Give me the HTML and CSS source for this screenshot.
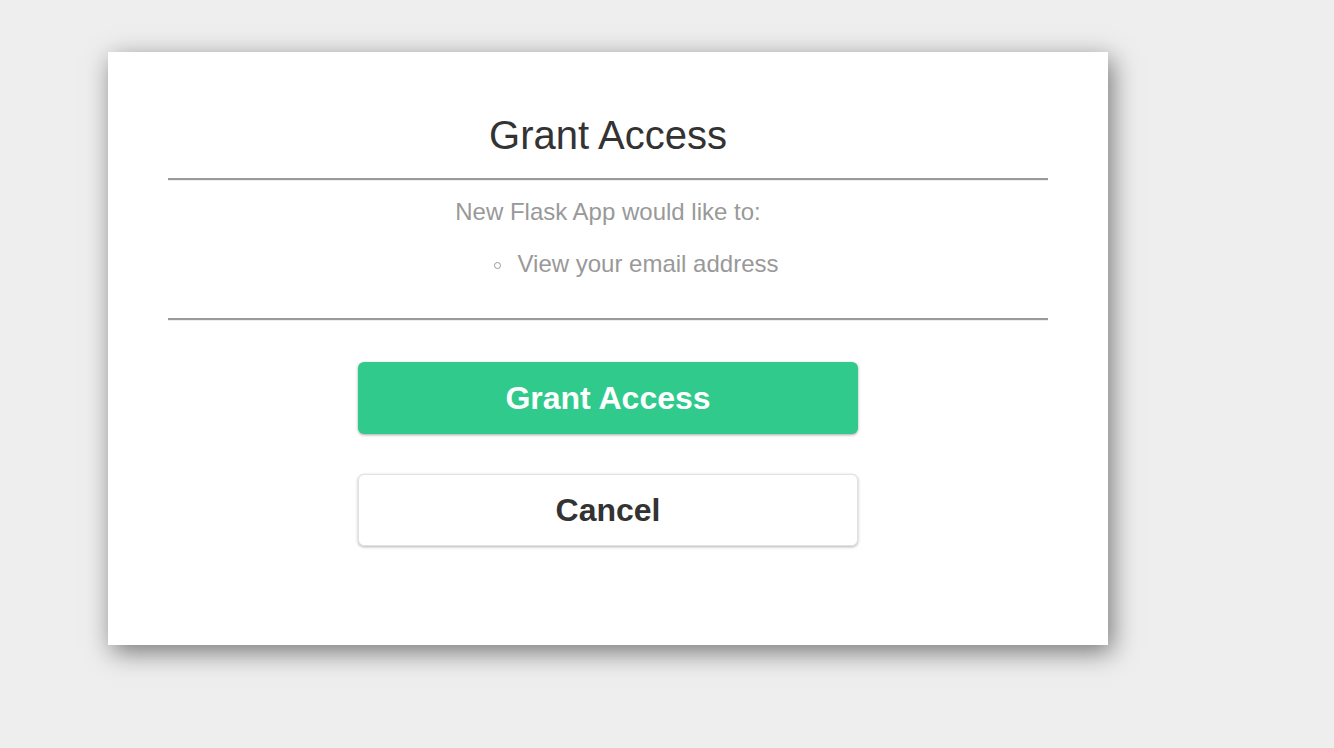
FILE: index.html
```html
<!DOCTYPE html>
<html lang="en">
<head>
<meta charset="utf-8">
<title>Grant Access</title>
<link rel="stylesheet" href="styles.css">
</head>
<body>
<main class="card">
  <h1 class="title">Grant Access</h1>
  <hr class="rule">
  <p class="intro">New Flask App would like to:</p>
  <ul class="scopes">
    <li class="scope">View your email address</li>
  </ul>
  <hr class="rule rule-bottom">
  <div class="actions">
    <button class="btn btn-grant" type="button">Grant Access</button>
    <button class="btn btn-cancel" type="button">Cancel</button>
  </div>
</main>
</body>
</html>
```

FILE: styles.css
```css
html, body {
  margin: 0;
  padding: 0;
}

body {
  background: #eeeeee;
  font-family: "Liberation Sans", Arial, Helvetica, sans-serif;
  width: 1334px;
  height: 748px;
  overflow: hidden;
  padding-top: 52px;
  padding-left: 108px;
  box-sizing: border-box;
}

.card {
  width: 1000px;
  height: 593px;
  box-sizing: border-box;
  background: #ffffff;
  box-shadow: 4px 7px 24px rgba(0, 0, 0, 0.5);
  padding: 60px 60px 0 60px;
  display: flex;
  flex-direction: column;
}

.title {
  margin: 0;
  font-size: 40px;
  line-height: 46px;
  font-weight: normal;
  color: #333333;
  text-align: center;
}

.rule {
  margin: 20px 0 0 0;
  height: 0;
  border: 0;
  border-top: 2px solid #9a9a9a;
  border-bottom: 1px solid #ececec;
}

.intro {
  margin: 17px 0 0 0;
  font-size: 24px;
  line-height: 28px;
  color: #999999;
  text-align: center;
}

.scopes {
  list-style: none;
  margin: 24px 0 0 0;
  padding: 0;
}

.scope {
  display: flex;
  justify-content: center;
  align-items: center;
  padding-left: 57px;
  font-size: 24px;
  line-height: 28px;
  color: #999999;
}

.scope::before {
  content: "";
  width: 5px;
  height: 5px;
  border: 1px solid #999999;
  border-radius: 50%;
  margin-right: 16px;
  margin-top: 2px;
}

.rule-bottom {
  margin-top: 40px;
}

.actions {
  margin-top: 41px;
  display: flex;
  flex-direction: column;
  align-items: center;
  gap: 40px;
}

.btn {
  width: 500px;
  height: 72px;
  border-radius: 6px;
  font-family: "Liberation Sans", Arial, Helvetica, sans-serif;
  font-size: 32px;
  font-weight: bold;
  cursor: pointer;
  padding: 0;
}

.btn-grant {
  background: #30ca8d;
  color: #ffffff;
  border: 0;
  box-shadow: 0 1px 3px rgba(0, 0, 0, 0.35);
}

.btn-cancel {
  background: #ffffff;
  color: #333333;
  border: 1px solid #e2e2e2;
  box-shadow: 0 1px 3px rgba(0, 0, 0, 0.3);
}
```
